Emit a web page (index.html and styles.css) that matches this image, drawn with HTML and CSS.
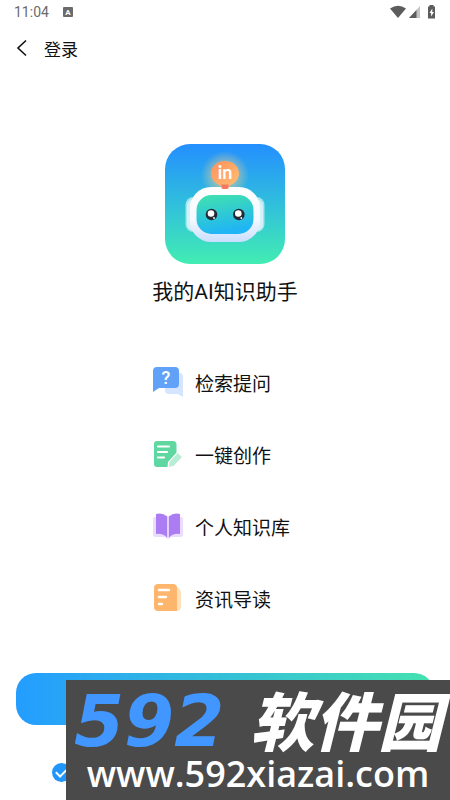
FILE: index.html
```html
<!DOCTYPE html>
<html lang="zh-CN">
<head>
  <meta charset="UTF-8">
  <meta name="viewport" content="width=device-width, initial-scale=1.0">
  <title>登录</title>
  <link rel="stylesheet" href="styles.css">
</head>
<body>
  <div class="status-bar">
    <span class="clock">11:04</span>
    <svg class="status-app" width="10" height="10" viewBox="0 0 10 10">
      <rect width="10" height="10" rx="1" fill="#6b6b6b"/>
      <text class="status-letter" x="5" y="8" text-anchor="middle">A</text>
    </svg>
    <svg class="status-icons" width="46" height="14" viewBox="0 0 46 14">
      <path d="M0 3.6Q8 -2 16 3.6L8 13z" fill="#5c5c5c"/>
      <path d="M30 1v12H19z" fill="#c4c4c4"/>
      <path d="M26.500 5v8H19z" fill="#5c5c5c"/>
      <path d="M39.500 0h4v1.500h1.500v12h-7V1.500h1.500z" fill="#5c5c5c"/>
      <path d="M42.300 3.500 39.500 8h1.600v3.500L44 7h-1.700z" fill="#fff"/>
    </svg>
  </div>

  <header class="nav">
    <button class="back" type="button" aria-label="返回">
      <svg width="12" height="18" viewBox="0 0 12 18">
        <path d="M10 1.500 2 9l8 7.500" fill="none" stroke="#111" stroke-width="1.600"/>
      </svg>
    </button>
    <h1 class="nav-title">登录</h1>
  </header>

  <main class="content">
    <svg class="logo" width="120" height="120" viewBox="0 0 120 120">
      <defs>
        <linearGradient id="sky" x1="0" y1="0" x2="0" y2="1">
          <stop offset="0" stop-color="#248fff"/>
          <stop offset="0.5" stop-color="#30bfdc"/>
          <stop offset="1" stop-color="#42edb2"/>
        </linearGradient>
        <linearGradient id="head" x1="0" y1="0" x2="0" y2="1">
          <stop offset="0" stop-color="#fff"/>
          <stop offset="0.6" stop-color="#f5f8ff"/>
          <stop offset="1" stop-color="#c9defd"/>
        </linearGradient>
        <linearGradient id="face" x1="0" y1="0" x2="0.25" y2="1">
          <stop offset="0" stop-color="#42e3ac"/>
          <stop offset="1" stop-color="#20b5f4"/>
        </linearGradient>
        <linearGradient id="bulb" x1="0" y1="0" x2="1" y2="1">
          <stop offset="0" stop-color="#ff9158"/>
          <stop offset="1" stop-color="#ffc078"/>
        </linearGradient>
        <radialGradient id="glow">
          <stop offset="0.45" stop-color="#ffd28a" stop-opacity="0.5"/>
          <stop offset="1" stop-color="#ffd28a" stop-opacity="0"/>
        </radialGradient>
      </defs>
      <rect width="120" height="120" rx="25" fill="url(#sky)"/>
      <circle cx="60" cy="31" r="24" fill="url(#glow)"/>
      <rect x="20.500" y="53" width="79" height="35" rx="8" fill="#a3e6ec"/>
      <rect x="22" y="55" width="76" height="32" rx="7" fill="#d4f1f7"/>
      <rect x="25" y="43" width="70" height="55" rx="21" fill="url(#head)"/>
      <rect x="31.500" y="51" width="57" height="39" rx="15" fill="url(#face)"/>
      <path d="M60 17c8 0 14 5.500 14 12.500 0 5-3.500 9-7.500 11-2 1-3 2-3 4h-7c0-2-1-3-3-4-4-2-7.500-6-7.500-11C46 22.500 52 17 60 17z" fill="url(#bulb)"/>
      <path d="M56.500 40.500h7V43q0 2-2 2h-3q-2 0-2-2z" fill="#f47860"/>
      <text class="logo-text" x="60" y="35" text-anchor="middle">in</text>
      <circle cx="46.500" cy="70.500" r="5.800" fill="#242a35"/>
      <circle cx="46" cy="69.500" r="3.300" fill="#fff"/>
      <circle cx="49" cy="74" r="0.900" fill="#fff"/>
      <circle cx="73.800" cy="70.500" r="5.800" fill="#242a35"/>
      <circle cx="73.300" cy="69.500" r="3.300" fill="#fff"/>
      <circle cx="76.300" cy="74" r="0.900" fill="#fff"/>
    </svg>
    <h2 class="app-name">我的AI知识助手</h2>

    <ul class="features">
      <li class="feature">
        <svg width="30" height="30" viewBox="0 0 30 30">
          <path d="M12 6h14q4 0 4 4v20l-5-3H16q-4 0-4-4z" fill="#d5e5ff"/>
          <path d="M4 0h18q4 0 4 4v13q0 4-4 4H6l-6 4V4q0-4 4-4z" fill="#62a1f8"/>
          <text class="question-mark" x="13" y="17" text-anchor="middle">?</text>
        </svg>
        <span>检索提问</span>
      </li>
      <li class="feature">
        <svg width="30" height="30" viewBox="0 0 30 30">
          <path d="M4 2h16q3.500 0 3.500 3.500v8L15 23l-.5 5H4q-3 0-3-3V5q0-3 3-3z" fill="#5fd7a1"/>
          <path d="M5 7.500h11M5 13h9M5 18.500h6" stroke="#fff" stroke-width="2.200" stroke-linecap="round"/>
          <path d="m24.500 14 4.500 4-8.500 9-4.500.8.500-4.800z" fill="#b8edd5"/>
        </svg>
        <span>一键创作</span>
      </li>
      <li class="feature">
        <svg width="30" height="30" viewBox="0 0 30 30">
          <path d="M2 6h26q2 0 2 2v16q0 2-2 2H18q-3 3-6 0H2q-2 0-2-2V8q0-2 2-2z" fill="#e9dcff"/>
          <path d="M14.300 5.500Q9 1 3 3v20q7-1 11.300 4z" fill="#ac7cf3"/>
          <path d="M15.700 5.500Q21 1 27 3v20q-7-1-11.300 4z" fill="#ac7cf3"/>
          <path d="M15 5v22" stroke="#eadeff" stroke-width="1.200"/>
        </svg>
        <span>个人知识库</span>
      </li>
      <li class="feature">
        <svg width="30" height="30" viewBox="0 0 30 30">
          <path d="M5 1h15q4 0 4 4v23H5q-4 0-4-4V5q0-4 4-4z" fill="#fdb66c"/>
          <path d="M24 3.500 26.500 6q1.500 1.500 1.500 4v12q0 6-4 6z" fill="#ffe0bc"/>
          <path d="M6 7h10M6 14h7M6 21h3" stroke="#fff" stroke-width="2.400" stroke-linecap="round"/>
        </svg>
        <span>资讯导读</span>
      </li>
    </ul>
  </main>

  <footer class="actions">
    <button class="login" type="button" aria-label="登录"></button>
    <input class="agree" type="checkbox" aria-label="同意用户协议" checked>
    <div class="banner">
      <div class="banner-name"><span class="banner-number">592</span><span>软件园</span></div>
      <div class="banner-url">www.592xiazai.com</div>
    </div>
  </footer>
</body>
</html>
```
FILE: styles.css
```css
* {
  box-sizing: border-box;
}

body {
  display: flex;
  flex-direction: column;
  min-height: 100vh;
  margin: 0;
  background: #fff;
  color: #111;
  font-family: Roboto, "Noto Sans CJK SC", sans-serif;
}

.status-bar {
  display: flex;
  align-items: center;
  height: 24px;
  padding: 0 14px;
}

.clock {
  color: #6b6b6b;
  font-size: 14px;
  line-height: 24px;
}

.status-app {
  margin-left: 14px;
}

.status-letter {
  fill: #fff;
  font-size: 8px;
  font-weight: 700;
}

.status-icons {
  margin-left: auto;
}

.nav {
  display: flex;
  align-items: center;
  gap: 16px;
  height: 48px;
  padding: 0 16px;
}

.back {
  display: flex;
  padding: 0;
  border: none;
  background: none;
  cursor: pointer;
}

.nav-title {
  margin: 0;
  font-size: 17px;
  font-weight: 400;
}

.content {
  display: flex;
  flex-direction: column;
  align-items: center;
  padding-top: 72px;
}

.logo-text {
  fill: #fff;
  font-family: Lato, sans-serif;
  font-size: 18px;
  font-weight: 700;
}

.app-name {
  margin: 12px 0 38px;
  font-size: 21px;
  font-weight: 400;
  line-height: 32px;
}

.features {
  width: 144px;
  margin: 0;
  padding: 0;
  list-style: none;
}

.feature {
  display: flex;
  align-items: center;
  gap: 12px;
  height: 72px;
  font-size: 19px;
  white-space: nowrap;
}

.question-mark {
  fill: #fff;
  font-size: 18px;
  font-weight: 500;
}

.actions {
  position: relative;
  margin-top: auto;
  padding: 0 16px 18px;
}

.login {
  display: block;
  width: 100%;
  height: 52px;
  border: none;
  border-radius: 20px;
  background: linear-gradient(90deg, #249dff, #44e2b0);
  cursor: pointer;
}

.agree {
  appearance: none;
  display: block;
  width: 19px;
  height: 19px;
  margin: 38px 0 0 36px;
  border: 1px solid #b5b5b5;
  border-radius: 50%;
}

.agree:checked {
  display: grid;
  place-items: center;
  padding-bottom: 3px;
  border: none;
  background: #1e96fb;
}

.agree:checked::before {
  content: "";
  width: 9px;
  height: 5px;
  border-bottom: 2px solid #fff;
  border-left: 2px solid #fff;
  transform: rotate(-45deg);
}

/* site banner over the bottom of the page */
.banner {
  position: absolute;
  right: 0;
  bottom: 0;
  left: 66px;
  height: 120px;
  padding: 8px 8px 0;
  background: #4a4a4a;
  color: #fff;
  white-space: nowrap;
}

.banner-name {
  display: flex;
  align-items: baseline;
  justify-content: space-between;
  height: 64px;
  font-family: "Noto Sans CJK SC", sans-serif;
  font-size: 64px;
  font-style: italic;
  font-weight: 900;
  line-height: 60px;
}

.banner-number {
  color: #4296ff;
  font-family: "DejaVu Sans", sans-serif;
  font-size: 72px;
}

.banner-url {
  font-family: "Open Sans", sans-serif;
  font-size: 36px;
  font-weight: 600;
  line-height: 44px;
  text-align: center;
}
```
